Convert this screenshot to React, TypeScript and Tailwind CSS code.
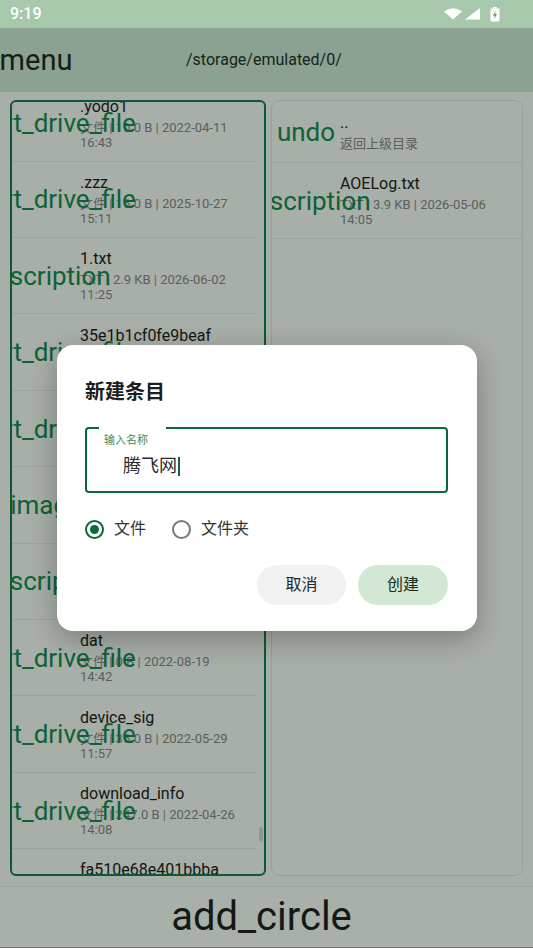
import React from "react";

type Entry = {
  icon: string;
  name: string;
  meta: string;
  time?: string;
};

const leftEntries: Entry[] = [
  { icon: "insert_drive_file", name: ".yodo1", meta: "文件 | 10.0 B | 2022-04-11", time: "16:43" },
  { icon: "insert_drive_file", name: ".zzz", meta: "文件 | 16.0 B | 2025-10-27", time: "15:11" },
  { icon: "description", name: "1.txt", meta: "TXT | 2.9 KB | 2026-06-02", time: "11:25" },
  { icon: "insert_drive_file", name: "35e1b1cf0fe9beaf", meta: "文件 | 16.0 B | 2023-03-14", time: "09:32" },
  { icon: "insert_drive_file", name: "9a7f3c2e81d4b6a0", meta: "文件 | 32.0 B | 2023-07-02", time: "20:17" },
  { icon: "image", name: "banner.png", meta: "PNG | 48.2 KB | 2024-01-19", time: "10:04" },
  { icon: "description", name: "config.txt", meta: "TXT | 512 B | 2024-11-08", time: "18:40" },
  { icon: "insert_drive_file", name: "dat", meta: "文件 | 0 B | 2022-08-19", time: "14:42" },
  { icon: "insert_drive_file", name: "device_sig", meta: "文件 | 36.0 B | 2022-05-29", time: "11:57" },
  { icon: "insert_drive_file", name: "download_info", meta: "文件 | 247.0 B | 2022-04-26", time: "14:08" },
  { icon: "insert_drive_file", name: "fa510e68e401bbba", meta: "文件 | 8.0 B | 2022-04-26", time: "14:08" },
];

const rightEntries: Entry[] = [
  { icon: "undo", name: "..", meta: "返回上级目录" },
  { icon: "description", name: "AOELog.txt", meta: "TXT | 3.9 KB | 2026-05-06", time: "14:05" },
];

function FileRow({ entry }: { entry: Entry }) {
  return (
    <div
      className={`flex items-center gap-[10px] border-b border-[#9ca39d] pl-[10px] pr-2 ${
        entry.time ? "h-[76.4px]" : "h-[62px]"
      }`}
    >
      {/* icon ligature name, rendered without the icon font */}
      <div className="relative z-10 flex w-12 shrink-0 justify-center whitespace-nowrap text-[26px] leading-none text-[#0d6236]">
        {entry.icon}
      </div>
      <div className="min-w-0">
        <div className="whitespace-nowrap text-[16px] leading-5 text-[#121612]">{entry.name}</div>
        <div className="mt-[3px] text-[13px] leading-[15px] text-[#5a605b]">
          <div className="whitespace-nowrap">{entry.meta}</div>
          {entry.time && <div>{entry.time}</div>}
        </div>
      </div>
    </div>
  );
}

function StatusIcons() {
  return (
    <div className="flex items-center gap-[2px]">
      <svg width="18" height="12" viewBox="0 0 18 12">
        <path d="M0 3.6 Q9 -3 18 3.6 L9 11.5 Z" fill="#fff" />
      </svg>
      <svg width="15" height="12" viewBox="0 0 15 12" className="ml-[1px]">
        <path d="M0 11.5 L15 11.5 L15 0 Z" fill="#fff" />
      </svg>
      <svg width="10" height="15" viewBox="0 0 10 15" className="ml-[8px]">
        <rect x="3" y="0" width="4" height="2" fill="#fff" />
        <rect x="0.5" y="1.5" width="9" height="13" rx="1" fill="#fff" />
        <path d="M5.8 3.5 L3 8.6 L4.9 8.6 L4.2 12.2 L7 7 L5.1 7 Z" fill="#5f8f69" />
      </svg>
    </div>
  );
}

export default function App() {
  return (
    <div className="relative flex h-[948px] w-[533px] flex-col overflow-hidden bg-[#a8aea8] font-[Roboto,'Noto_Sans_CJK_SC',sans-serif]">
      {/* Status bar */}
      <div className="flex h-[28px] shrink-0 items-center justify-between bg-[#a7c8aa] pl-[10px] pr-[33px]">
        <span className="text-[16px] font-medium text-white">9:19</span>
        <StatusIcons />
      </div>

      {/* Top bar */}
      <div className="flex h-[64px] shrink-0 items-center bg-[#8ba192] pl-3">
        <div className="flex w-12 shrink-0 justify-center whitespace-nowrap text-[29px] leading-none text-[#132016]">
          menu
        </div>
        <div className="ml-[126px] text-[16px] text-[#18231b]">/storage/emulated/0/</div>
      </div>

      {/* Dual panes */}
      <div className="flex min-h-0 flex-1 gap-[5px] px-[10px] pb-[10px] pt-2">
        <div className="relative w-[256px] overflow-hidden rounded-md border-2 border-[#0c5a31]">
          <div className="-mt-[16.7px] mr-[6px]">
            {leftEntries.map((e) => (
              <FileRow key={e.name} entry={e} />
            ))}
          </div>
          <div className="absolute right-[1px] top-[725px] h-[15px] w-[4px] rounded-full bg-[#8f978f]" />
        </div>
        <div className="flex-1 overflow-hidden rounded-lg border border-[#979f98]">
          {rightEntries.map((e) => (
            <FileRow key={e.name} entry={e} />
          ))}
        </div>
      </div>

      {/* Bottom action */}
      <div className="flex h-[62px] shrink-0 items-center justify-center border-b border-t border-b-[#6f746f] border-t-[#9da49e] bg-[#a9afa9] pr-[10px]">
        <span className="text-[40px] leading-none text-[#141914]">add_circle</span>
      </div>

      {/* New entry dialog */}
      <div className="absolute left-[57px] top-[345px] z-30 w-[420px] rounded-[16px] bg-white pb-[26px] pl-[28px] pr-[29px] pt-[33px] shadow-[0_8px_28px_rgba(0,0,0,0.28)]">
        <div className="text-[20px] font-bold leading-[28px] text-[#1b201c]">新建条目</div>

        <div className="relative mt-[21px] h-[66px] rounded-[4px] border-2 border-[#0b6a3b]">
          <span className="absolute -top-[2px] left-[12px] h-[2px] w-[67px] bg-white" />
          <div className="pl-[17px] pt-[5px] text-[11px] leading-[14px] text-[#3a8c5c]">输入名称</div>
          <div className="mt-[8px] flex items-center pl-[36px]">
            <span className="text-[18px] leading-[20px] text-[#2a2a2a]">腾飞网</span>
            <span className="ml-[1px] h-[19px] w-[2px] bg-[#0b6a3b]" />
          </div>
        </div>

        <div className="mt-[24px] flex h-[24px] items-center text-[16px] text-[#333733]">
          <span className="flex h-[19px] w-[19px] items-center justify-center rounded-full border-2 border-[#0b6a3b]">
            <span className="h-[9px] w-[9px] rounded-full bg-[#0b6a3b]" />
          </span>
          <span className="ml-[10px]">文件</span>
          <span className="ml-[26px] h-[19px] w-[19px] rounded-full border-2 border-[#777a77]" />
          <span className="ml-[10px]">文件夹</span>
        </div>

        <div className="mt-[24px] flex justify-end gap-3">
          <button className="h-[40px] w-[89px] rounded-full bg-[#f1f1f1] text-[16px] text-[#222522]">取消</button>
          <button className="h-[40px] w-[90px] rounded-full bg-[#d2e7d4] text-[16px] text-[#1c2e21]">创建</button>
        </div>
      </div>
    </div>
  );
}
